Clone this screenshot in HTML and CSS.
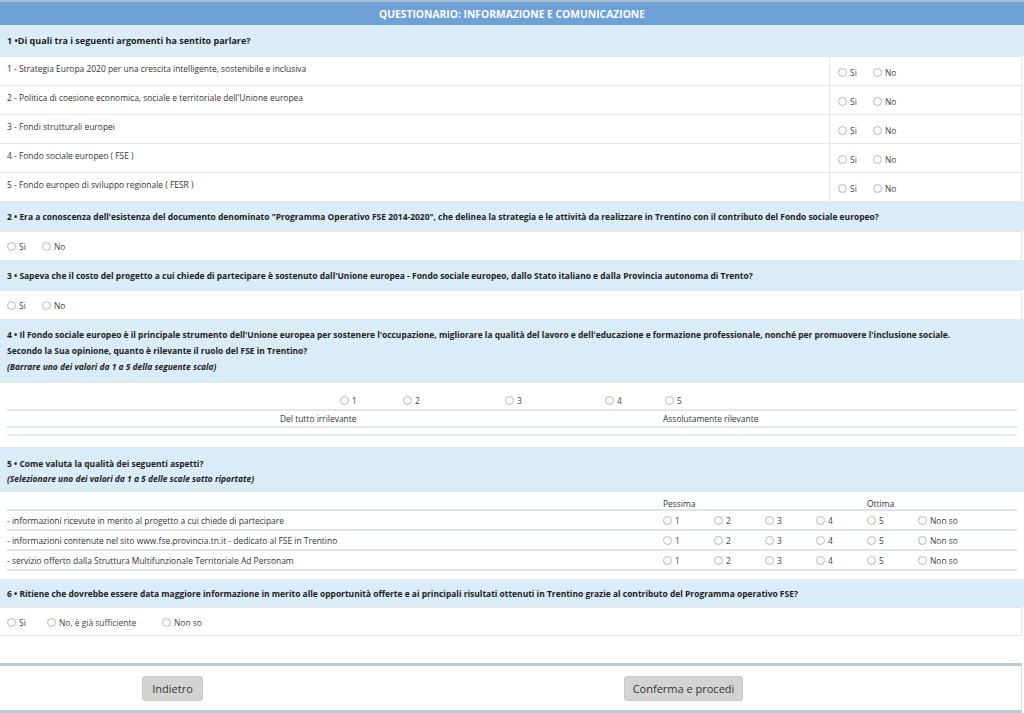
FILE: index.html
```html
<!DOCTYPE html>
<html lang="it">
<head>
<meta charset="utf-8">
<title>Questionario</title>
<link rel="stylesheet" href="styles.css">
</head>
<body>
<div class="page">
  <div class="title">QUESTIONARIO: INFORMAZIONE E COMUNICAZIONE</div>

  <div class="qhead q1">1 •Di quali tra i seguenti argomenti ha sentito parlare?</div>
  <div class="items">
    <div class="item"><div class="itext">1 - Strategia Europa 2020 per una crescita intelligente, sostenibile e inclusiva</div><div class="iopts"><label class="opt w-si"><span class="radio"></span>Si</label><label class="opt"><span class="radio"></span>No</label></div></div>
    <div class="item"><div class="itext">2 - Politica di coesione economica, sociale e territoriale dell'Unione europea</div><div class="iopts"><label class="opt w-si"><span class="radio"></span>Si</label><label class="opt"><span class="radio"></span>No</label></div></div>
    <div class="item"><div class="itext">3 - Fondi strutturali europei</div><div class="iopts"><label class="opt w-si"><span class="radio"></span>Si</label><label class="opt"><span class="radio"></span>No</label></div></div>
    <div class="item"><div class="itext">4 - Fondo sociale europeo ( FSE )</div><div class="iopts"><label class="opt w-si"><span class="radio"></span>Si</label><label class="opt"><span class="radio"></span>No</label></div></div>
    <div class="item"><div class="itext">5 - Fondo europeo di sviluppo regionale ( FESR )</div><div class="iopts"><label class="opt w-si"><span class="radio"></span>Si</label><label class="opt"><span class="radio"></span>No</label></div></div>
  </div>

  <div class="qhead q2">2 • Era a conoscenza dell'esistenza del documento denominato "Programma Operativo FSE 2014-2020", che delinea la strategia e le attività da realizzare in Trentino con il contributo del Fondo sociale europeo?</div>
  <div class="answer"><label class="opt w-si2"><span class="radio"></span>Si</label><label class="opt"><span class="radio"></span>No</label></div>

  <div class="qhead q2">3 • Sapeva che il costo del progetto a cui chiede di partecipare è sostenuto dall'Unione europea - Fondo sociale europeo, dallo Stato italiano e dalla Provincia autonoma di Trento?</div>
  <div class="answer"><label class="opt w-si2"><span class="radio"></span>Si</label><label class="opt"><span class="radio"></span>No</label></div>

  <div class="qhead q4">
    <div class="ql">4 • Il Fondo sociale europeo è il principale strumento dell'Unione europea per sostenere l'occupazione, migliorare la qualità del lavoro e dell'educazione e formazione professionale, nonché per promuovere l'inclusione sociale.</div>
    <div class="ql">Secondo la Sua opinione, quanto è rilevante il ruolo del FSE in Trentino?</div>
    <div class="ql note">(Barrare uno dei valori da 1 a 5 della seguente scala)</div>
  </div>
  <div class="scale">
    <div class="scale-radios">
      <label class="opt s1"><span class="radio"></span>1</label>
      <label class="opt s2"><span class="radio"></span>2</label>
      <label class="opt s3"><span class="radio"></span>3</label>
      <label class="opt s4"><span class="radio"></span>4</label>
      <label class="opt"><span class="radio"></span>5</label>
    </div>
    <div class="scale-labels">
      <span class="lab-low">Del tutto irrilevante</span>
      <span class="lab-high">Assolutamente rilevante</span>
    </div>
    <div class="scale-end"></div>
  </div>

  <div class="qhead q5">
    <div class="ql">5 • Come valuta la qualità dei seguenti aspetti?</div>
    <div class="ql note">(Selezionare uno dei valori da 1 a 5 delle scale sotto riportate)</div>
  </div>
  <div class="grid">
    <div class="grow ghead"><div class="gtext"></div><div class="gopts"><span class="gcell">Pessima</span><span class="gcell"></span><span class="gcell"></span><span class="gcell"></span><span class="gcell">Ottima</span><span class="gcell"></span></div></div>
    <div class="grow"><div class="gtext">- informazioni ricevute in merito al progetto a cui chiede di partecipare</div><div class="gopts"><label class="opt gcell"><span class="radio"></span>1</label><label class="opt gcell"><span class="radio"></span>2</label><label class="opt gcell"><span class="radio"></span>3</label><label class="opt gcell"><span class="radio"></span>4</label><label class="opt gcell"><span class="radio"></span>5</label><label class="opt gcell"><span class="radio"></span>Non so</label></div></div>
    <div class="grow"><div class="gtext">- informazioni contenute nel sito www.fse.provincia.tn.it - dedicato al FSE in Trentino</div><div class="gopts"><label class="opt gcell"><span class="radio"></span>1</label><label class="opt gcell"><span class="radio"></span>2</label><label class="opt gcell"><span class="radio"></span>3</label><label class="opt gcell"><span class="radio"></span>4</label><label class="opt gcell"><span class="radio"></span>5</label><label class="opt gcell"><span class="radio"></span>Non so</label></div></div>
    <div class="grow"><div class="gtext">- servizio offerto dalla Struttura Multifunzionale Territoriale Ad Personam</div><div class="gopts"><label class="opt gcell"><span class="radio"></span>1</label><label class="opt gcell"><span class="radio"></span>2</label><label class="opt gcell"><span class="radio"></span>3</label><label class="opt gcell"><span class="radio"></span>4</label><label class="opt gcell"><span class="radio"></span>5</label><label class="opt gcell"><span class="radio"></span>Non so</label></div></div>
  </div>

  <div class="qhead q6">6 • Ritiene che dovrebbe essere data maggiore informazione in merito alle opportunità offerte e ai principali risultati ottenuti in Trentino grazie al contributo del Programma operativo FSE?</div>
  <div class="answer last"><label class="opt w-a"><span class="radio"></span>Si</label><label class="opt w-b"><span class="radio"></span>No, è già sufficiente</label><label class="opt"><span class="radio"></span>Non so</label></div>

  <div class="spacer"></div>
  <div class="footer">
    <button class="btn btn-back" type="button">Indietro</button>
    <button class="btn btn-next" type="button">Conferma e procedi</button>
  </div>
</div>
</body>
</html>
```

FILE: styles.css
```css
html, body {
  margin: 0;
  padding: 0;
  background: #ffffff;
}
body {
  font-family: "Open Sans", "DejaVu Sans", sans-serif;
  font-size: 8.45px;
  color: #333333;
}
.page {
  width: 1024px;
  height: 713px;
  overflow: hidden;
  display: flex;
  flex-direction: column;
}
.title {
  height: 23px;
  border-top: 2px solid #a9bccd;
  background: #6ea1d8;
  color: #ffffff;
  font-weight: 700;
  font-size: 10.3px;
  display: flex;
  align-items: center;
  justify-content: center;
  flex-shrink: 0;
}
.qhead {
  background: #d9ecf7;
  font-weight: 700;
  color: #1d1d1d;
  padding: 0 7px;
  display: flex;
  align-items: center;
  flex-shrink: 0;
  border-top: 1px solid #e2e8ec;
}
.q1 { height: 31px; border-top: none; font-size: 9px; }
.q2 { height: 29px; }
.q4 {
  height: 63px;
  flex-direction: column;
  align-items: flex-start;
  justify-content: flex-start;
  padding-top: 7px;
  box-sizing: border-box;
}
.q4 .ql { line-height: 16px; }
.q5 {
  height: 44px;
  flex-direction: column;
  align-items: flex-start;
  justify-content: flex-start;
  padding-top: 8px;
  box-sizing: border-box;
}
.q5 .ql { line-height: 15px; }
.q6 { height: 27px; }
.note { font-style: italic; }

.items { flex-shrink: 0; border-right: 1px solid #e6e6e6; margin-right: 2px; }
.item {
  height: 28px;
  border-top: 1px solid #e6e6e6;
  display: flex;
}
.itext {
  flex: 1;
  padding: 6px 7px 0;
  border-right: 1px solid #e6e6e6;
}
.iopts {
  width: 191px;
  display: flex;
  align-items: center;
  padding: 2px 0 0 8px;
  box-sizing: border-box;
}

.opt {
  display: inline-flex;
  align-items: center;
  gap: 3px;
  color: #444444;
  white-space: nowrap;
}
.radio {
  width: 7px;
  height: 7px;
  border: 1px solid #b8b8b8;
  border-radius: 50%;
  background: #fbfbfb;
  box-sizing: content-box;
  flex-shrink: 0;
}
.w-si { width: 35px; }
.w-si2 { width: 35px; }
.w-a { width: 40px; }
.w-b { width: 115px; }

.answer {
  height: 28px;
  border-top: 1px solid #e6e6e6;
  padding: 0 7px;
  display: flex;
  align-items: center;
  flex-shrink: 0;
  border-right: 1px solid #e6e6e6;
  margin-right: 2px;
}
.answer.last { border-bottom: 1px solid #e6e6e6; height: 29px; padding-top: 2px; box-sizing: border-box; }

.scale {
  height: 65px;
  flex-shrink: 0;
  padding: 0 7px;
  box-sizing: border-box;
  border-top: 1px solid #e6e6e6;
  display: flex;
  flex-direction: column;
}
.scale-radios {
  height: 28px;
  display: flex;
  align-items: flex-end;
  padding-left: 333px;
  padding-bottom: 3px;
  box-sizing: border-box;
  border-bottom: 2px solid #dfe7ee;
}
.s1 { width: 63px; }
.s2 { width: 102px; }
.s3 { width: 100px; }
.s4 { width: 60px; }
.scale-labels {
  height: 17px;
  display: flex;
  align-items: center;
  border-bottom: 2px solid #dfe7ee;
  box-sizing: border-box;
}
.lab-low { margin-left: 273px; width: 383px; }
.scale-end {
  height: 6px;
  border-bottom: 2px solid #e7ecef;
}

.grid {
  flex-shrink: 0;
  height: 87px;
  padding: 0 7px;
  border-top: 1px solid #e6e6e6;
  display: flex;
  flex-direction: column;
}
.grow {
  height: 20px;
  display: flex;
  align-items: center;
  border-bottom: 2px solid #dde6ee;
  box-sizing: border-box;
}
.grow.ghead {
  height: 19px;
  align-items: flex-end;
  padding-top: 8px;
}
.gtext { flex: 1; }
.gopts {
  display: flex;
  width: 354px;
}
.gcell { width: 51px; }
.gopts .gcell:last-child { width: 90px; }
.ghead .gcell { line-height: 10px; }

.spacer { height: 27px; flex-shrink: 0; }
.footer {
  flex-shrink: 0;
  height: 44px;
  border-top: 3px solid #b7cad6;
  border-bottom: 3px solid #b7cad6;
  border-right: 1px solid #d8dfe4;
  margin-right: 2px;
  display: flex;
  align-items: center;
  padding-left: 142px;
}
.btn {
  font-family: "Open Sans", "DejaVu Sans", sans-serif;
  font-size: 11px;
  color: #333333;
  background: #d3d3d3;
  border: 1px solid #c8c8c8;
  border-radius: 3px;
  height: 25px;
  padding: 0;
  white-space: nowrap;
}
.btn-back { width: 61px; }
.btn-next { width: 119px; margin-left: 421px; }
```
